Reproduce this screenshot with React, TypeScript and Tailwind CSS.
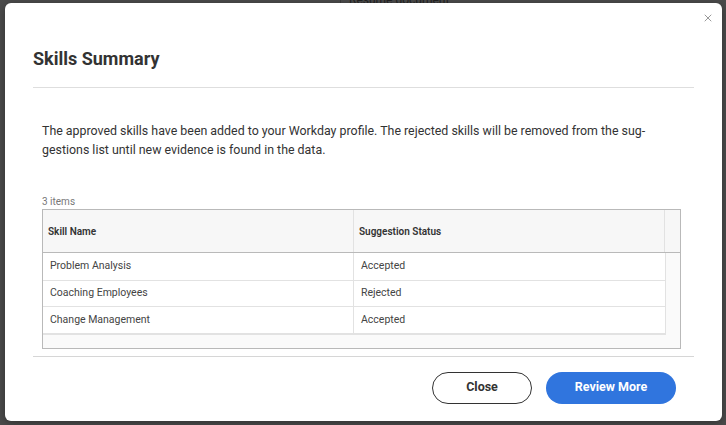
import { X } from "lucide-react";

const ROWS = [
  { skill: "Problem Analysis", status: "Accepted" },
  { skill: "Coaching Employees", status: "Rejected" },
  { skill: "Change Management", status: "Accepted" },
];

export default function App() {
  return (
    <div
      className="relative w-[726px] h-[425px] overflow-hidden bg-[#4b4b4b]"
      style={{ fontFamily: "Roboto, 'Liberation Sans', sans-serif" }}
    >
      {/* page behind the overlay */}
      <div className="absolute left-[340px] top-0 h-[3px] w-[400px] border-l border-[#3a3a3a]">
        <span className="absolute left-[8px] top-[-9px] text-[12px] text-[#222]">Resume document</span>
      </div>

      <div className="absolute left-[5px] top-[3px] w-[717px] h-[418px] rounded-[6px] bg-white shadow-[0_2px_8px_rgba(0,0,0,0.35)] flex flex-col">
        <button className="absolute right-[8px] top-[9px] text-[#777]">
          <X size={12} strokeWidth={1.5} />
        </button>

        <div className="px-[28px] pt-[44px]">
          <h1 className="text-[18px] font-bold text-[#333] leading-[24px]">Skills Summary</h1>
          <div className="mt-[16px] border-t border-[#dedede]" />
        </div>

        <div className="px-[37px] pt-[33px]">
          <p className="text-[12.4px] leading-[19px] text-[#333]">
            The approved skills have been added to your Workday profile. The rejected skills will be removed from the sug-
            <br />
            gestions list until new evidence is found in the data.
          </p>

          <div className="mt-[37px] text-[10px] leading-[12px] text-[#777]">3 items</div>

          <div className="mt-[1px] w-[639px] border border-[#b9b9b9] bg-[#fafafa]">
            <div className="flex h-[43px] border-b border-[#b9b9b9] bg-[#f7f7f7]">
              <div className="w-[311px] border-r border-[#e2e2e2] flex items-center pl-[5px] text-[10px] font-semibold text-[#333]">
                Skill Name
              </div>
              <div className="w-[311px] border-r border-[#e2e2e2] flex items-center pl-[5px] text-[10px] font-semibold text-[#333]">
                Suggestion Status
              </div>
              <div className="flex-1" />
            </div>
            <div className="w-[623px] border-r border-b-2 border-[#e2e2e2] bg-white">
              {ROWS.map((r, i) => (
                <div key={r.skill} className={`flex h-[26.5px] ${i > 0 ? "border-t border-[#e2e2e2]" : ""}`}>
                  <div className="w-[311px] border-r border-[#e2e2e2] flex items-center pl-[7px] text-[10.5px] text-[#444]">
                    {r.skill}
                  </div>
                  <div className="flex-1 flex items-center pl-[7px] text-[10.5px] text-[#444]">{r.status}</div>
                </div>
              ))}
            </div>
            <div className="h-[13px]" />
          </div>
        </div>

        <div className="px-[28px] mt-[7px]">
          <div className="border-t border-[#d6d6d6]" />
        </div>

        <div className="flex justify-end gap-[14px] pr-[46px] pt-[15px]">
          <button className="w-[100px] h-[32px] rounded-full border border-[#333] text-[12.5px] font-bold text-[#333]">
            Close
          </button>
          <button className="w-[130px] h-[32px] rounded-full bg-[#3075de] text-[12.5px] font-bold text-white">
            Review More
          </button>
        </div>
      </div>
    </div>
  );
}
